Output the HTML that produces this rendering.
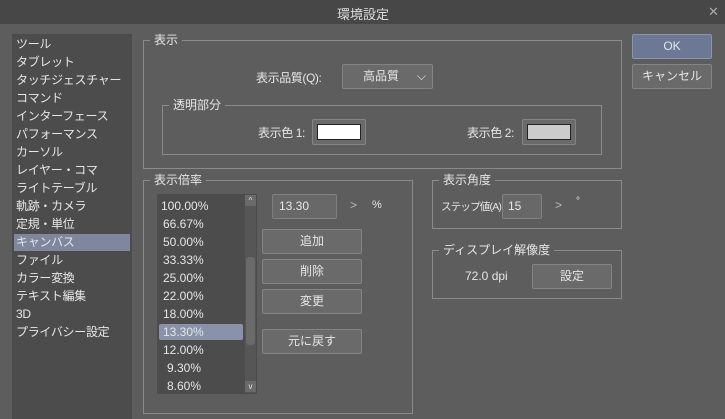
<!DOCTYPE html>
<html><head><meta charset="utf-8"><style>
*{margin:0;padding:0;box-sizing:border-box}
body{width:725px;height:419px;background:#5d5d5d;font-family:"Liberation Sans","Noto Sans CJK JP",sans-serif;font-size:12px;color:#e6e6e6;position:relative;overflow:hidden}
.a{position:absolute;white-space:nowrap}
.title{left:0;top:0;width:725px;height:24px;background:#474747}
.grp{position:absolute;border:1px solid #8a8a8a}
.gt{position:absolute;background:#5d5d5d;padding:0 4px;top:-9px;left:6px;line-height:16px}
.btn{position:absolute;background:#6a6a6a;border:1px solid #848484;border-radius:2px;text-align:center;line-height:22px}
.inp{position:absolute;background:#686868;border:1px solid #808080;border-radius:2px;line-height:22px;padding-left:6px}
.li{position:absolute;left:16px;line-height:18px;letter-spacing:-0.3px}
.lv{position:absolute;line-height:18px;left:163px}
</style></head><body>
<div class="a title"></div>
<div class="a" style="left:337px;top:4px;font-size:13px;color:#ddd">環境設定</div>
<div class="a" style="left:708px;top:4px;font-size:13px;color:#aaa">✕</div>

<div class="a" style="left:12px;top:34px;width:120px;height:385px;background:#4c4c4c"></div>
<div class="a" style="left:14px;top:234px;width:116px;height:17px;background:#7e879e"></div>
<div class="li" style="top:35px">ツール</div>
<div class="li" style="top:53px">タブレット</div>
<div class="li" style="top:71px">タッチジェスチャー</div>
<div class="li" style="top:89px">コマンド</div>
<div class="li" style="top:107px">インターフェース</div>
<div class="li" style="top:125px">パフォーマンス</div>
<div class="li" style="top:143px">カーソル</div>
<div class="li" style="top:161px">レイヤー・コマ</div>
<div class="li" style="top:179px">ライトテーブル</div>
<div class="li" style="top:197px">軌跡・カメラ</div>
<div class="li" style="top:215px">定規・単位</div>
<div class="li" style="top:233px">キャンバス</div>
<div class="li" style="top:251px">ファイル</div>
<div class="li" style="top:269px">カラー変換</div>
<div class="li" style="top:287px">テキスト編集</div>
<div class="li" style="top:305px">3D</div>
<div class="li" style="top:323px">プライバシー設定</div>

<div class="grp" style="left:143px;top:40px;width:479px;height:129px"><div class="gt">表示</div></div>
<div class="a" style="left:256px;top:69px;letter-spacing:-0.4px">表示品質(Q):</div>
<div class="btn" style="left:342px;top:64px;width:91px;height:25px;text-align:left;padding-left:20px">高品質<span style="position:absolute;right:6px;top:0">⌵</span></div>
<div class="grp" style="left:162px;top:105px;width:440px;height:50px"><div class="gt">透明部分</div></div>
<div class="a" style="left:258px;top:124px;letter-spacing:-0.4px">表示色 1:</div>
<div class="a" style="left:312px;top:119px;width:54px;height:26px;background:#6a6a6a;border:1px solid #848484;border-radius:2px"></div>
<div class="a" style="left:317px;top:124px;width:44px;height:16px;background:#fff;border:1px solid #222"></div>
<div class="a" style="left:467px;top:124px;letter-spacing:-0.4px">表示色 2:</div>
<div class="a" style="left:522px;top:119px;width:54px;height:26px;background:#6a6a6a;border:1px solid #848484;border-radius:2px"></div>
<div class="a" style="left:527px;top:124px;width:44px;height:16px;background:#ccc;border:1px solid #222"></div>

<div class="grp" style="left:143px;top:180px;width:270px;height:234px"><div class="gt">表示倍率</div></div>
<div class="a" style="left:157px;top:194px;width:100px;height:200px;background:#4c4c4c"></div>
<div class="a" style="left:245px;top:195px;width:11px;height:198px;background:#565656"></div>
<div class="a" style="left:246px;top:257px;width:9px;height:88px;background:#6a6a6a;border-radius:3px"></div>
<div class="a" style="left:245px;top:195px;width:11px;height:11px;background:#6a6a6a;font-size:8px;text-align:center;line-height:11px">^</div>
<div class="a" style="left:245px;top:381px;width:11px;height:11px;background:#6a6a6a;font-size:8px;text-align:center;line-height:11px">v</div>
<div class="a" style="left:159px;top:324px;width:84px;height:16px;background:#8892ab;border-radius:2px"></div>
<div class="lv" style="top:197px;left:161px">100.00%</div>
<div class="lv" style="top:215px">66.67%</div>
<div class="lv" style="top:233px">50.00%</div>
<div class="lv" style="top:251px">33.33%</div>
<div class="lv" style="top:269px">25.00%</div>
<div class="lv" style="top:287px">22.00%</div>
<div class="lv" style="top:305px">18.00%</div>
<div class="lv" style="top:323px">13.30%</div>
<div class="lv" style="top:341px">12.00%</div>
<div class="lv" style="top:359px;left:167px">9.30%</div>
<div class="lv" style="top:377px;left:167px">8.60%</div>
<div class="inp" style="left:272px;top:194px;width:65px;height:25px">13.30</div>
<div class="a" style="left:350px;top:198px;color:#bbb">&gt;</div>
<div class="a" style="left:372px;top:199px;font-size:11px">%</div>
<div class="btn" style="left:262px;top:229px;width:100px;height:25px">追加</div>
<div class="btn" style="left:262px;top:259px;width:100px;height:25px">削除</div>
<div class="btn" style="left:262px;top:289px;width:100px;height:25px">変更</div>
<div class="btn" style="left:262px;top:329px;width:100px;height:25px">元に戻す</div>

<div class="grp" style="left:432px;top:180px;width:190px;height:49px"><div class="gt">表示角度</div></div>
<div class="a" style="left:441px;top:199px;font-size:10.5px;letter-spacing:-0.8px">ステップ値(A):</div>
<div class="inp" style="left:502px;top:194px;width:40px;height:25px;padding-left:5px">15</div>
<div class="a" style="left:555px;top:198px;color:#bbb">&gt;</div>
<div class="a" style="left:576px;top:196px;font-size:10px">°</div>
<div class="grp" style="left:432px;top:250px;width:190px;height:49px"><div class="gt">ディスプレイ解像度</div></div>
<div class="a" style="left:465px;top:269px">72.0 dpi</div>
<div class="btn" style="left:532px;top:264px;width:80px;height:25px">設定</div>

<div class="btn" style="left:632px;top:34px;width:80px;height:25px;background:#6d7894;border-color:#8994b0">OK</div>
<div class="btn" style="left:632px;top:64px;width:80px;height:25px">キャンセル</div>
</body></html>
